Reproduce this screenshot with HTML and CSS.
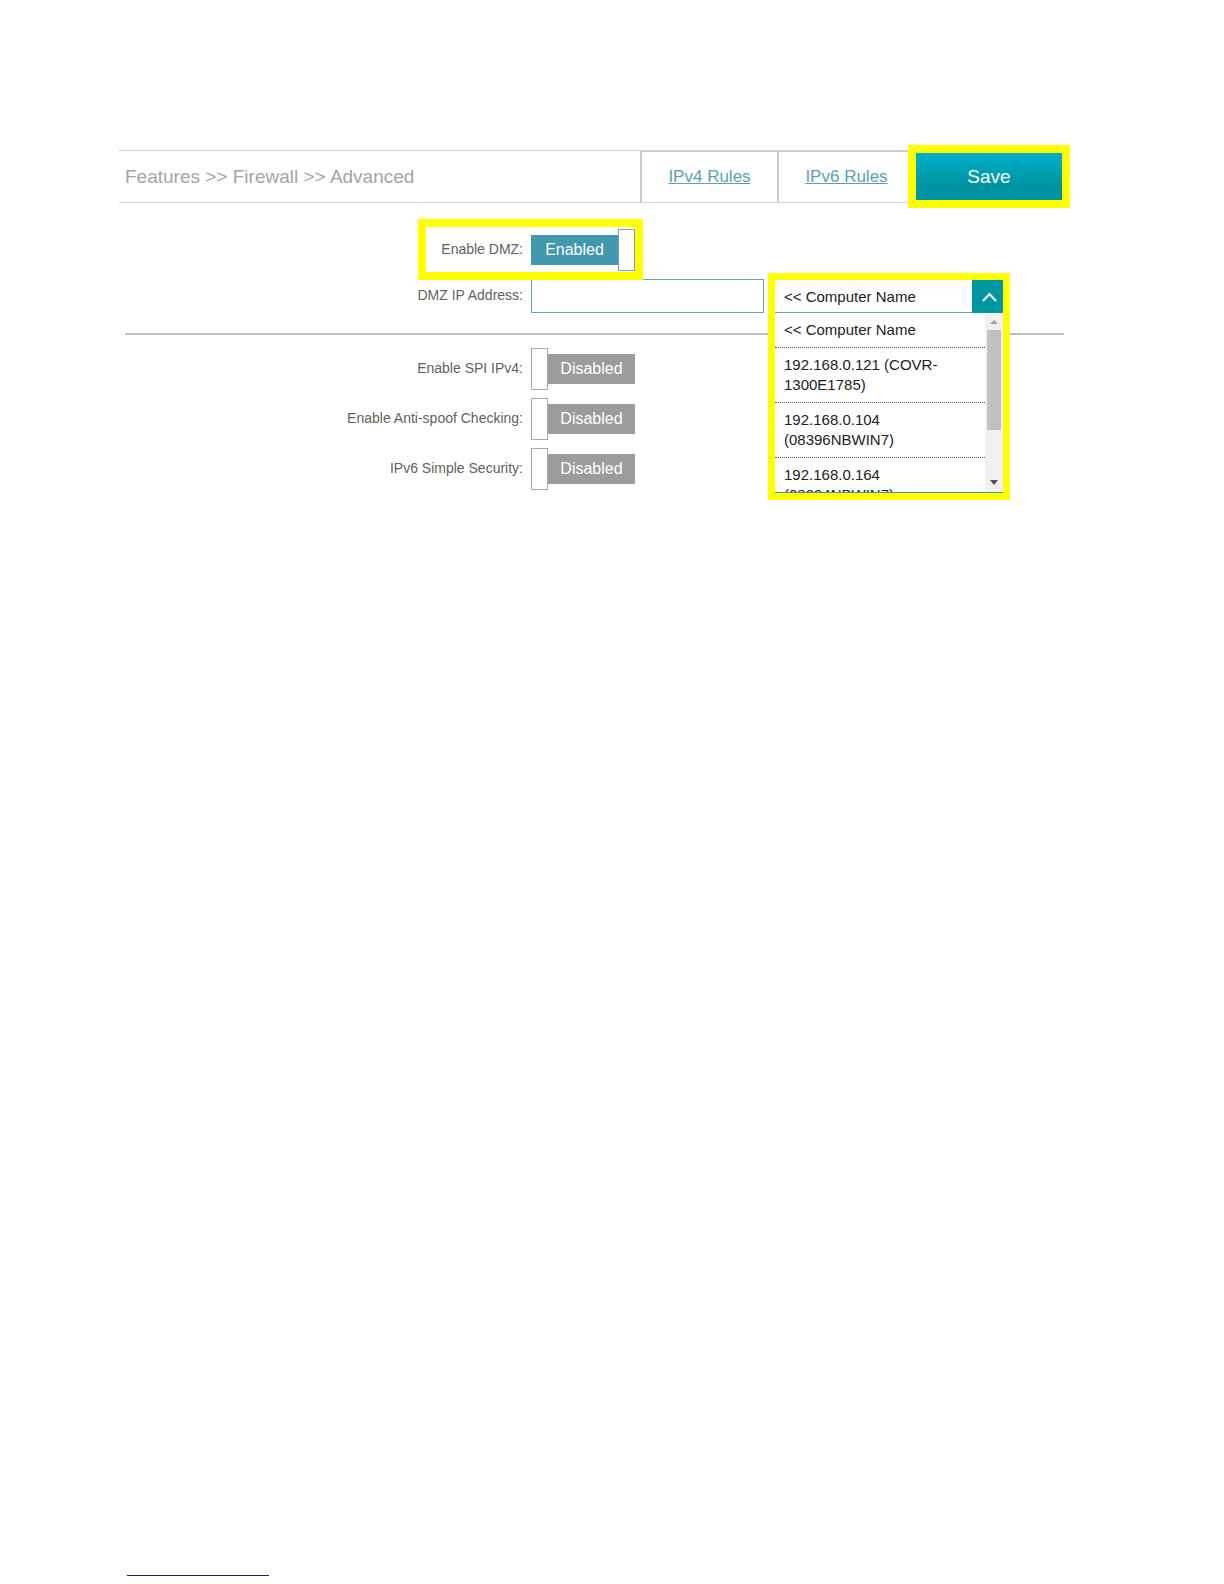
FILE: index.html
```
<!DOCTYPE html>
<html lang="en">
<head>
    <meta charset="UTF-8">
    <meta name="viewport" content="width=device-width, initial-scale=1.0">
    <title>Firewall - Advanced</title>
    <link rel="stylesheet" href="styles.css">
</head>
<body>

    <main class="page">
        <header class="toolbar">
            <h1 class="path">Features &gt;&gt; Firewall &gt;&gt; Advanced</h1>
            <a class="tab" href="#ipv4">IPv4 Rules</a>
            <a class="tab" href="#ipv6">IPv6 Rules</a>
            <button class="save" type="submit" form="firewall">Save</button>
        </header>

        <form id="firewall" class="settings">
            <div class="row">
                <label for="dmz">Enable DMZ:</label>
                <div class="switch on">
                    <input type="checkbox" id="dmz" checked>
                    <span class="state">Enabled</span>
                    <span class="ring"></span>
                </div>
            </div>

            <div class="row">
                <label for="dmzIp">DMZ IP Address:</label>
                <div class="address">
                    <input class="ip" type="text" id="dmzIp">
                    <div class="picker">
                        <!-- open computer list, lies over the rows below -->
                        <div class="picker-panel">
                            <div class="picker-head">
                                <select id="computer" aria-label="Computer Name">
                                    <option>&lt;&lt; Computer Name</option>
                                    <option>192.168.0.121 (COVR-1300E1785)</option>
                                    <option>192.168.0.104 (08396NBWIN7)</option>
                                    <option>192.168.0.164 (08394NBWIN7)</option>
                                </select>
                                <svg class="arrow" viewBox="0 0 31 33"><path d="M11 21L17.500 14L24 21" fill="none" stroke="#fff" stroke-width="2.200"/></svg>
                            </div>
                            <div class="picker-body">
                                <ul class="options">
                                    <li>&lt;&lt; Computer Name</li>
                                    <li>192.168.0.121 (COVR-1300E1785)</li>
                                    <li>192.168.0.104 (08396NBWIN7)</li>
                                    <li>192.168.0.164 (08394NBWIN7)</li>
                                </ul>
                                <div class="scrollbar">
                                    <svg viewBox="0 0 18 17"><path d="M5 11L9 7L13 11Z" fill="#a3a3a3"/></svg>
                                    <div class="thumb"></div>
                                    <svg viewBox="0 0 18 17"><path d="M5 5L9 10L13 5Z" fill="#505050"/></svg>
                                </div>
                            </div>
                        </div>
                    </div>
                </div>
            </div>

            <hr>

            <div class="row">
                <label for="spi">Enable SPI IPv4:</label>
                <div class="switch">
                    <input type="checkbox" id="spi">
                    <span class="state">Disabled</span>
                </div>
            </div>
            <div class="row">
                <label for="spoof">Enable Anti-spoof Checking:</label>
                <div class="switch">
                    <input type="checkbox" id="spoof">
                    <span class="state">Disabled</span>
                </div>
            </div>
            <div class="row">
                <label for="simple">IPv6 Simple Security:</label>
                <div class="switch">
                    <input type="checkbox" id="simple">
                    <span class="state">Disabled</span>
                </div>
            </div>
        </form>
    </main>

    <footer>
        <a class="foot-link" href="#top" aria-label="Back to top"></a>
    </footer>

</body>
</html>
```
FILE: styles.css
```
* {
    box-sizing: border-box;
}

body {
    margin: 0;
    min-height: 100vh;
    display: flex;
    flex-direction: column;
    background-color: #fff;
    color: #62625a;
    font-family: "Liberation Sans", Arial, sans-serif;
    font-size: 15px;
}

.page {
    flex: 1;
    padding: 150px 160px 0 119px;
}

/* Top bar */
.toolbar {
    display: flex;
    align-items: center;
    height: 53px;
    padding-right: 2px;
    border-top: 1px solid #ccc;
    border-bottom: 1px solid #d8d8d8;
}

.path {
    flex: 1;
    margin: 0;
    padding-left: 6px;
    font-size: 19px;
    font-weight: normal;
    color: #a4a4a4;
}

.tab {
    display: flex;
    align-items: center;
    justify-content: center;
    align-self: stretch;
    width: 137px;
    border-top: 1px solid #ccc;
    border-left: 2px solid #ccc;
    font-size: 17px;
    color: #5b9fb3;
}

.save {
    width: 146px;
    height: 47px;
    margin-left: 2px;
    border: none;
    background: linear-gradient(#00b1c9, #0093a2 70%);
    outline: 8px solid #ff0;
    color: #fff;
    font-family: inherit;
    font-size: 19px;
    cursor: pointer;
}

/* Settings */
.settings {
    display: flex;
    flex-direction: column;
    gap: 8px;
    padding-top: 26px;
}

.row {
    display: grid;
    grid-template-columns: 404fr 533fr;
    gap: 8px;
    align-items: center;
}

.row label {
    padding-bottom: 2px;
    font-size: 14px;
    text-align: right;
}

.settings hr {
    width: calc(100% - 6px);
    height: 2px;
    margin: 12px 0 5px 6px;
    border: none;
    background-color: #bdbdbd;
}

.switch {
    position: relative;
    display: flex;
    align-items: center;
    width: 104px;
}

.switch input {
    appearance: none;
    width: 17px;
    height: 42px;
    margin: 0;
    border: 1px solid #a8a8a8;
    background-color: #fff;
}

.state {
    flex: 1;
    height: 30px;
    line-height: 30px;
    background-color: #9c9c9c;
    color: #fff;
    font-size: 16px;
    text-align: center;
}

.switch.on {
    flex-direction: row-reverse;
}

.switch.on input {
    border-color: #6fa5b5;
}

.switch.on .state {
    background-color: #4298af;
}

.ring {
    position: absolute;
    top: -2px;
    right: 0;
    bottom: -1px;
    left: -105px;
    outline: 8px solid #ff0;
    pointer-events: none;
}

.address {
    display: flex;
    gap: 11px;
}

.ip {
    width: 233px;
    height: 34px;
    border: 1px solid #68a0ae;
    font: inherit;
}

/* Computer list */
.picker {
    position: relative;
    width: 228px;
}

.picker-panel {
    position: absolute;
    top: 1px;
    left: 0;
    right: 0;
    background-color: #fff;
    outline: 7px solid #ff0;
    color: #222;
}

.picker-head {
    display: flex;
    height: 33px;
}

.picker-head select {
    appearance: none;
    flex: 1;
    min-width: 0;
    padding: 0 9px;
    border: none;
    border-bottom: 1px solid #68a0ae;
    background-color: #fff;
    color: inherit;
    font: inherit;
}

.arrow {
    width: 31px;
    height: 33px;
    background-color: #0097a3;
}

.picker-body {
    display: flex;
    height: 180px;
    border-bottom: 1px solid #4298af;
}

.options {
    flex: 1;
    margin: 0;
    padding: 0;
    overflow: hidden;
    list-style: none;
}

.options li {
    padding: 7px 9px;
    border-bottom: 1px dotted #555;
    line-height: 20px;
}

.scrollbar {
    display: flex;
    flex-direction: column;
    width: 18px;
    background-color: #f1f1f1;
}

.thumb {
    flex: 1;
    margin: 0 2px 45px;
    background-color: #c1c1c1;
}

footer {
    padding: 0 127px 8px;
}

.foot-link {
    display: block;
    width: 142px;
    border-bottom: 1px solid #1a1a8c;
}
```
